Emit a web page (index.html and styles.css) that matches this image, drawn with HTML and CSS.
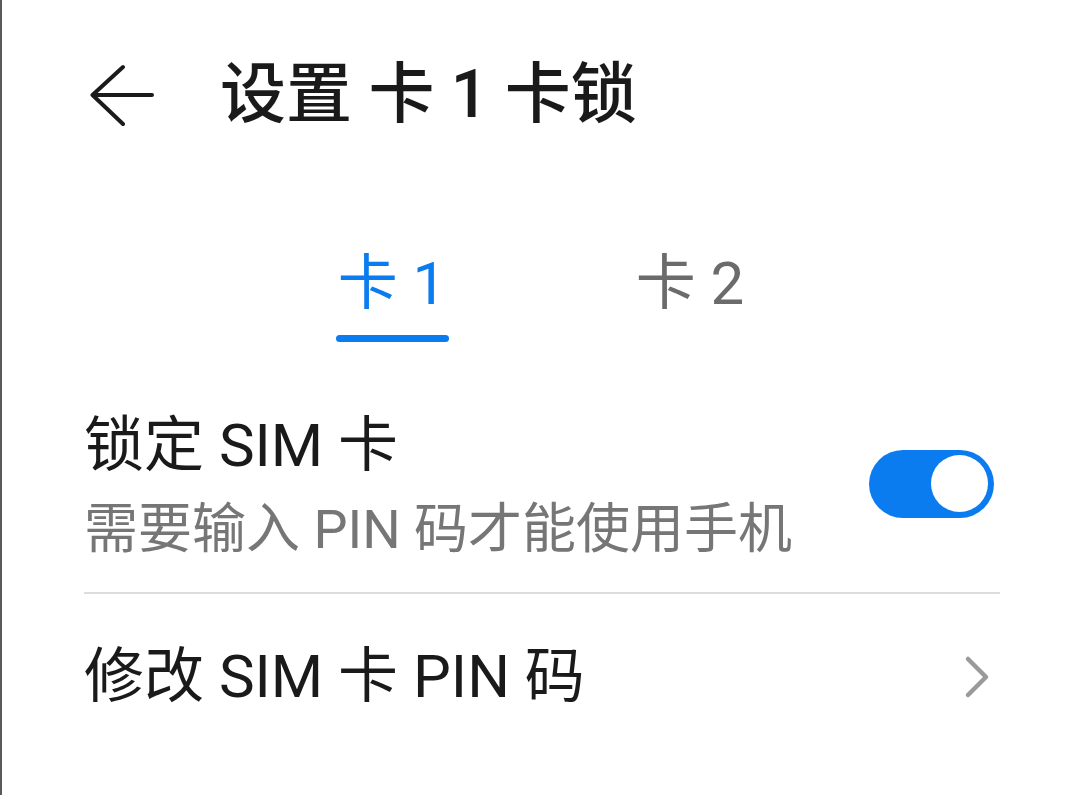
FILE: index.html
```html
<!DOCTYPE html>
<html lang="zh-CN">
<head>
  <meta charset="UTF-8" />
  <meta name="viewport" content="width=device-width, initial-scale=1.0" />
  <title>设置 卡 1 卡锁</title>
  <link rel="stylesheet" href="styles.css">
</head>
<body>
  <div class="page">

    <div class="top-bar">
      <button class="back-btn">
        <svg width="64" height="64" viewBox="0 0 64 64">
          <path d="M33 4 L2.5 32 L33 61 M2.5 32 L62 32" fill="none" stroke="#1b1b1b" stroke-width="4" stroke-linecap="round" stroke-linejoin="round"/>
        </svg>
      </button>
      <h1>设置 卡 1 卡锁</h1>
    </div>

    <div class="tabs">
      <div class="tab active">
        <span>卡 1</span>
        <div class="tab-line"></div>
      </div>
      <div class="tab">
        <span>卡 2</span>
        <div class="tab-line"></div>
      </div>
    </div>

    <div class="list">
      <div class="row row-switch">
        <div class="row-text">
          <div class="row-title">锁定 SIM 卡</div>
          <div class="row-sub">需要输入 PIN 码才能使用手机</div>
        </div>
        <div class="switch on"><div class="knob"></div></div>
      </div>
      <div class="divider"></div>
      <div class="row row-link">
        <div class="row-title">修改 SIM 卡 PIN 码</div>
        <svg class="chevron" width="28" height="44" viewBox="0 0 28 44">
          <path d="M4 4 L22 22 L4 40" fill="none" stroke="#9a9a9a" stroke-width="4.5" stroke-linecap="round" stroke-linejoin="round"/>
        </svg>
      </div>
    </div>

  </div>
</body>
</html>
```

FILE: styles.css
```css
body {
  margin: 0;
  background-color: #ffffff;
  font-family: Roboto, "Noto Sans CJK SC", sans-serif;
  color: #1a1a1a;
}

.page {
  height: 795px;
  border-left: 2px solid #5a5a5a;
  box-sizing: border-box;
  overflow: hidden;
}

.top-bar {
  display: flex;
  align-items: center;
  height: 190px;
  padding-left: 88px;
}

.back-btn {
  background: none;
  border: none;
  padding: 0;
  width: 64px;
  height: 64px;
  margin-right: 66px;
  cursor: pointer;
}

.back-btn svg {
  display: block;
}

.top-bar h1 {
  margin: 0;
  font-size: 66px;
  font-weight: 500;
  line-height: 1;
  color: #1a1a1a;
}

.tabs {
  display: flex;
  justify-content: center;
  padding-top: 64px;
}

.tab {
  width: 298px;
  display: flex;
  flex-direction: column;
  align-items: center;
  font-size: 60px;
  line-height: 1;
  color: #6b6b6b;
}

.tab.active {
  color: #0a7cf0;
}

.tab-line {
  width: 113px;
  height: 7px;
  border-radius: 4px;
  margin-top: 21px;
  background-color: transparent;
}

.tab.active .tab-line {
  background-color: #0a7cf0;
}

.list {
  padding: 0 80px 0 82px;
}

.row {
  display: flex;
  align-items: center;
  justify-content: space-between;
}

.row-switch {
  padding: 74px 0 35px;
}

.row-title {
  font-size: 60px;
  line-height: 1;
  color: #1a1a1a;
}

.row-sub {
  font-size: 54px;
  line-height: 1;
  margin-top: 27px;
  color: #767676;
}

.switch {
  width: 125px;
  height: 68px;
  border-radius: 34px;
  background-color: #d0d0d0;
  display: flex;
  align-items: center;
  padding: 0 6px;
  box-sizing: border-box;
  margin: 0 6px 6px 0;
}

.switch.on {
  background-color: #0a7cf0;
  justify-content: flex-end;
}

.knob {
  width: 57px;
  height: 57px;
  border-radius: 50%;
  background-color: #ffffff;
}

.divider {
  height: 2px;
  background-color: #dcdcdc;
}

.row-link {
  height: 166px;
}

.chevron {
  margin-right: 8px;
}
```
